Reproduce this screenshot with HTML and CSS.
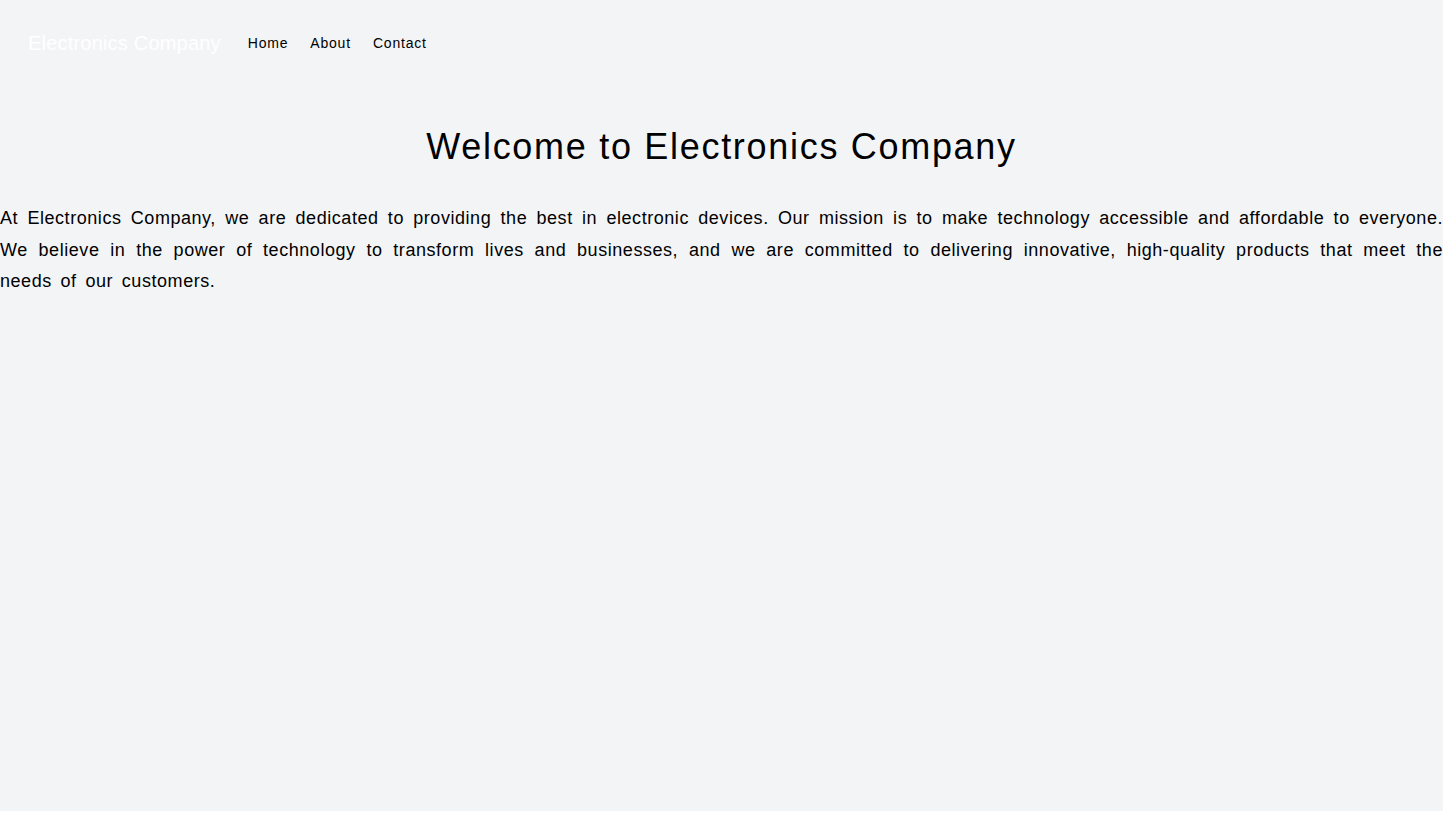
FILE: index.html
```html
<html>
<head>
    <link rel="stylesheet" href="styles.css">
</head>
<body>
    <div class="page">
        <nav class="nav">
            <a class="brand" href="#">Electronics Company</a>
            <div class="nav-links">
                <a class="nav-link" href="#">Home</a>
                <a class="nav-link" href="#">About</a>
                <a class="nav-link" href="#">Contact</a>
            </div>
        </nav>

        <!-- Intro -->
        <main class="intro">
            <h1 class="title">Welcome to Electronics Company</h1>
            <p class="lead">At Electronics Company, we are dedicated to providing the best in electronic devices. Our mission is to make technology accessible and affordable to everyone. We believe in the power of technology to transform lives and businesses, and we are committed to delivering innovative, high-quality products that meet the needs of our customers.</p>
        </main>
    </div>
</body>
</html>
```

FILE: styles.css
```css
html {
    background: #fff;
}
body {
    margin: 0;
    font-family: "Liberation Sans", Arial, sans-serif;
    color: #000;
}
.page {
    background-color: #f3f4f6;
    width: calc(100% - 2px);
    min-height: calc(100vh - 2px);
}
.nav {
    display: flex;
    align-items: center;
    padding: 29px 28px 0;
}
.brand {
    color: #fff;
    font-size: 20px;
    line-height: 28px;
    letter-spacing: 0.2px;
    text-decoration: none;
    margin-right: 27px;
}
.nav-links {
    display: flex;
    gap: 22px;
}
.nav-link {
    color: #000;
    font-size: 14px;
    line-height: 20px;
    letter-spacing: 0.8px;
    text-decoration: none;
}
.intro {
    padding-top: 70px;
}
.title {
    font-size: 36px;
    line-height: 40px;
    letter-spacing: 1.7px;
    font-weight: normal;
    text-align: center;
    margin: 0 0 36px;
}
.lead {
    font-size: 18px;
    line-height: 1.75;
    letter-spacing: 0.55px;
    word-spacing: 3.2px;
    text-align: justify;
    margin: 0;
}
```
